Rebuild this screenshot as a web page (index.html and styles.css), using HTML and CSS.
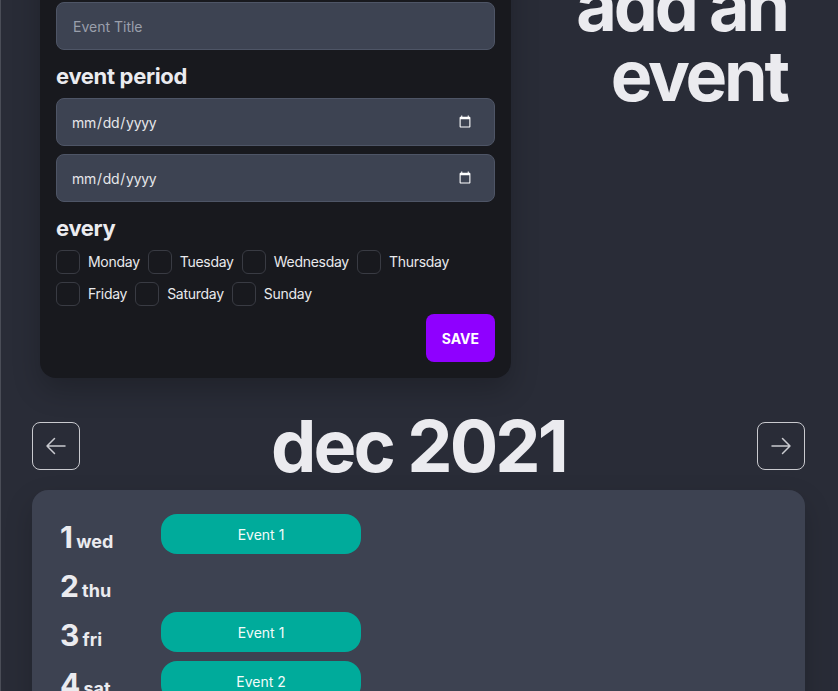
FILE: index.html
```html
<!DOCTYPE html>
<html lang="en">
<head>
<meta charset="utf-8">
<title>Calendar</title>
<link rel="stylesheet" href="styles.css">
</head>
<body>
<div class="page">
  <section class="top">
    <form class="form-card">
      <h2 class="form-heading first">event title</h2>
      <input class="field" type="text" placeholder="Event Title">
      <h2 class="form-heading">event period</h2>
      <input class="field date-field" type="date">
      <input class="field date-field second" type="date">
      <h2 class="form-heading">every</h2>
      <div class="days">
        <label class="day"><input type="checkbox" class="check"><span>Monday</span></label>
        <label class="day"><input type="checkbox" class="check"><span>Tuesday</span></label>
        <label class="day"><input type="checkbox" class="check"><span>Wednesday</span></label>
        <label class="day"><input type="checkbox" class="check"><span>Thursday</span></label>
        <label class="day"><input type="checkbox" class="check"><span>Friday</span></label>
        <label class="day"><input type="checkbox" class="check"><span>Saturday</span></label>
        <label class="day"><input type="checkbox" class="check"><span>Sunday</span></label>
      </div>
      <div class="actions"><button type="button" class="save">SAVE</button></div>
    </form>
    <h1 class="title">add an<br>event</h1>
  </section>

  <section class="month-header">
    <button class="nav-btn" type="button" aria-label="previous month">
      <svg width="24" height="24" viewBox="0 0 24 24" fill="none" stroke="currentColor" stroke-width="1.5" stroke-linecap="round" stroke-linejoin="round"><path d="M10.5 19.5L3 12l7.5-7.5M3 12h18"/></svg>
    </button>
    <h2 class="month">dec 2021</h2>
    <button class="nav-btn" type="button" aria-label="next month">
      <svg width="24" height="24" viewBox="0 0 24 24" fill="none" stroke="currentColor" stroke-width="1.5" stroke-linecap="round" stroke-linejoin="round"><path d="M13.5 4.5L21 12l-7.5 7.5M21 12H3"/></svg>
    </button>
  </section>

  <section class="calendar">
    <div class="row"><div class="day-label"><span class="num">1</span> <span class="wd">wed</span></div><div class="event">Event 1</div></div>
    <div class="row"><div class="day-label"><span class="num">2</span> <span class="wd">thu</span></div></div>
    <div class="row"><div class="day-label"><span class="num">3</span> <span class="wd">fri</span></div><div class="event">Event 1</div></div>
    <div class="row"><div class="day-label"><span class="num">4</span> <span class="wd">sat</span></div><div class="event">Event 2</div></div>
    <div class="row"><div class="day-label"><span class="num">5</span> <span class="wd">sun</span></div></div>
  </section>
</div>
</body>
</html>
```

FILE: styles.css
```css
* { box-sizing: border-box; }

html, body { height: 100%; overflow: hidden; }

body {
  margin: 0;
  background: #292c37;
  border-left: 1px solid #4a4d57;
  font-family: Inter, "Noto Sans", sans-serif;
  color: #ebebef;
  color-scheme: dark;
}

.page {
  margin-top: -50px;
  padding: 0 33px 40px 31px;
}

.top {
  display: flex;
  justify-content: space-between;
  align-items: flex-start;
  padding: 0 18px 0 8px;
}

.form-card {
  width: 471px;
  background: #18191e;
  border-radius: 16px;
  padding: 16px;
  box-shadow: 0 12px 28px rgba(0, 0, 0, 0.22);
  display: flex;
  flex-direction: column;
}

.form-heading {
  margin: 12px 0 8px;
  font-size: 22px;
  line-height: 28px;
  font-weight: 700;
  letter-spacing: -0.015em;
}
.form-heading.first { margin-top: 0; }

.field {
  display: block;
  height: 48px;
  width: 100%;
  background: #3d4352;
  border: 1px solid #4e5566;
  border-radius: 8px;
  padding: 0 16px;
  font-family: inherit;
  font-size: 14px;
  font-weight: 400;
  color: #e6e7ea;
  outline: none;
}
.field::placeholder { color: #9a9fab; }
.field.second { margin-top: 8px; }
.date-field { padding: 0 20px 0 14px; letter-spacing: -0.02em; }
.date-field::-webkit-calendar-picker-indicator { filter: brightness(1.4); }

.days {
  display: flex;
  flex-wrap: wrap;
  gap: 8px;
}
.day {
  display: flex;
  align-items: center;
  gap: 8px;
  font-size: 14px;
  line-height: 24px;
  letter-spacing: -0.02em;
  color: #e9e9ec;
}
.check {
  appearance: none;
  -webkit-appearance: none;
  margin: 0;
  width: 24px;
  height: 24px;
  border: 1px solid #393b43;
  border-radius: 6px;
  background: transparent;
}

.actions {
  display: flex;
  justify-content: flex-end;
  margin-top: 8px;
}
.save {
  height: 48px;
  padding: 0 16px;
  border: none;
  border-radius: 8px;
  background: #8f00ff;
  color: #fff;
  font-family: inherit;
  font-size: 14px;
  font-weight: 700;
}

.title {
  margin: 21px 0 0;
  text-align: right;
  font-size: 70px;
  line-height: 70px;
  font-weight: 700;
  letter-spacing: -0.045em;
  color: #ebebef;
}

.month-header {
  margin-top: 32px;
  display: flex;
  align-items: center;
  justify-content: space-between;
}
.nav-btn {
  width: 48px;
  height: 48px;
  border: 1px solid #c9cacf;
  border-radius: 8px;
  background: transparent;
  color: #c9cacf;
  display: flex;
  align-items: center;
  justify-content: center;
  padding: 0;
}
.month {
  margin: 0;
  font-size: 72px;
  line-height: 72px;
  font-weight: 700;
  letter-spacing: -0.04em;
  color: #ebebef;
}

.calendar {
  margin-top: 8px;
  background: #3d4251;
  border-radius: 16px;
  padding: 24px;
  display: flex;
  flex-direction: column;
  gap: 9px;
  box-shadow: 0 12px 28px rgba(0, 0, 0, 0.18);
}
.row {
  display: flex;
  align-items: center;
  gap: 8px;
  height: 40px;
}
.day-label {
  width: 97px;
  padding: 5px 0 0 4px;
  font-weight: 700;
  white-space: nowrap;
}
.num { font-size: 30px; letter-spacing: -0.02em; }
.wd { font-size: 18px; }
.event {
  width: 200px;
  height: 40px;
  border-radius: 16px;
  background: #00ab9b;
  color: #f2fbfa;
  font-size: 14px;
  display: flex;
  align-items: center;
  justify-content: center;
}
```
